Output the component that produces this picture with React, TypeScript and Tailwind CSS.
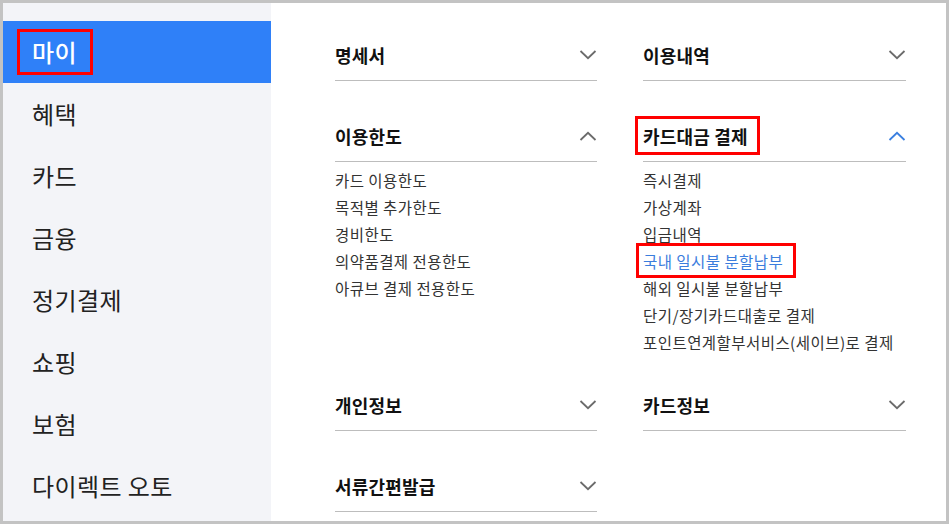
import React from 'react';

const font = { fontFamily: '"Noto Sans CJK KR", "Noto Sans", sans-serif' };

const sideMenus = ['마이', '혜택', '카드', '금융', '정기결제', '쇼핑', '보험', '다이렉트 오토'];

interface SectionProps {
  title: string;
  open?: boolean;
  active?: boolean;
  items?: string[];
  highlight?: string;
}

const Chevron = ({ up, blue }: { up?: boolean; blue?: boolean }) => (
  <svg width="18" height="10" viewBox="0 0 18 10" className={blue ? 'text-[#3a7fe0]' : 'text-[#6b6b6b]'}>
    <path
      d={up ? 'M1.5 9 L9 1.8 L16.5 9' : 'M1.5 1 L9 8.2 L16.5 1'}
      fill="none"
      stroke="currentColor"
      strokeWidth="1.8"
    />
  </svg>
);

const Section = ({ title, open, active, items = [], highlight }: SectionProps) => (
  <div>
    <div className="relative flex h-[52px] items-center justify-between border-b border-[#bdbdbd]">
      <span className="relative text-[18px] font-bold leading-[24px] tracking-[0.2px] text-[#111]">
        {title}
        {active && (
          <span className="absolute -left-[8px] -right-[12px] -top-[8px] -bottom-[7px] border-[3px] border-[#f00]" />
        )}
      </span>
      <Chevron up={open} blue={active} />
    </div>
    {open && (
      <ul className="pt-[5px] -mb-[6px]">
        {items.map((item) => (
          <li
            key={item}
            className={`h-[27px] text-[15.5px] leading-[27px] tracking-[0.45px] ${
              item === highlight ? 'text-[#3b7ddd]' : 'text-[#333]'
            }`}
          >
            <span className="relative">
              {item}
              {item === highlight && (
                <span className="absolute -left-[7px] -right-[13px] -top-[7px] -bottom-[6px] border-[3px] border-[#f00]" />
              )}
            </span>
          </li>
        ))}
      </ul>
    )}
  </div>
);

export default function App() {
  return (
    <div style={font} className="flex h-[524px] w-[949px] border-[3px] border-[#c3c3c3] bg-white">
      {/* 좌측 메뉴 */}
      <aside className="w-[268px] shrink-0 bg-[#f3f4f8] pt-[18px]">
        <ul>
          {sideMenus.map((menu, i) => (
            <li
              key={menu}
              className={`flex h-[62px] items-center pl-[29px] text-[24px] leading-[30px] tracking-[0.4px] ${
                i === 0 ? 'bg-[#2f80f8] font-medium text-white' : 'text-[#222]'
              }`}
            >
              <span className="relative">
                {menu}
                {i === 0 && (
                  <span className="absolute -left-[15px] -right-[16px] -top-[8px] -bottom-[8px] border-[3px] border-[#f00]" />
                )}
              </span>
            </li>
          ))}
        </ul>
      </aside>

      {/* 메뉴 그리드 */}
      <main className="flex-1 pl-[64px] pr-[37px] pt-[26px]">
        <div className="grid grid-cols-[262px_263px] gap-x-[46px] gap-y-[29px]">
          <Section title="명세서" />
          <Section title="이용내역" />
          <Section
            title="이용한도"
            open
            items={['카드 이용한도', '목적별 추가한도', '경비한도', '의약품결제 전용한도', '아큐브 결제 전용한도']}
          />
          <Section
            title="카드대금 결제"
            open
            active
            highlight="국내 일시불 분할납부"
            items={[
              '즉시결제',
              '가상계좌',
              '입금내역',
              '국내 일시불 분할납부',
              '해외 일시불 분할납부',
              '단기/장기카드대출로 결제',
              '포인트연계할부서비스(세이브)로 결제',
            ]}
          />
          <Section title="개인정보" />
          <Section title="카드정보" />
          <Section title="서류간편발급" />
        </div>
      </main>
    </div>
  );
}
